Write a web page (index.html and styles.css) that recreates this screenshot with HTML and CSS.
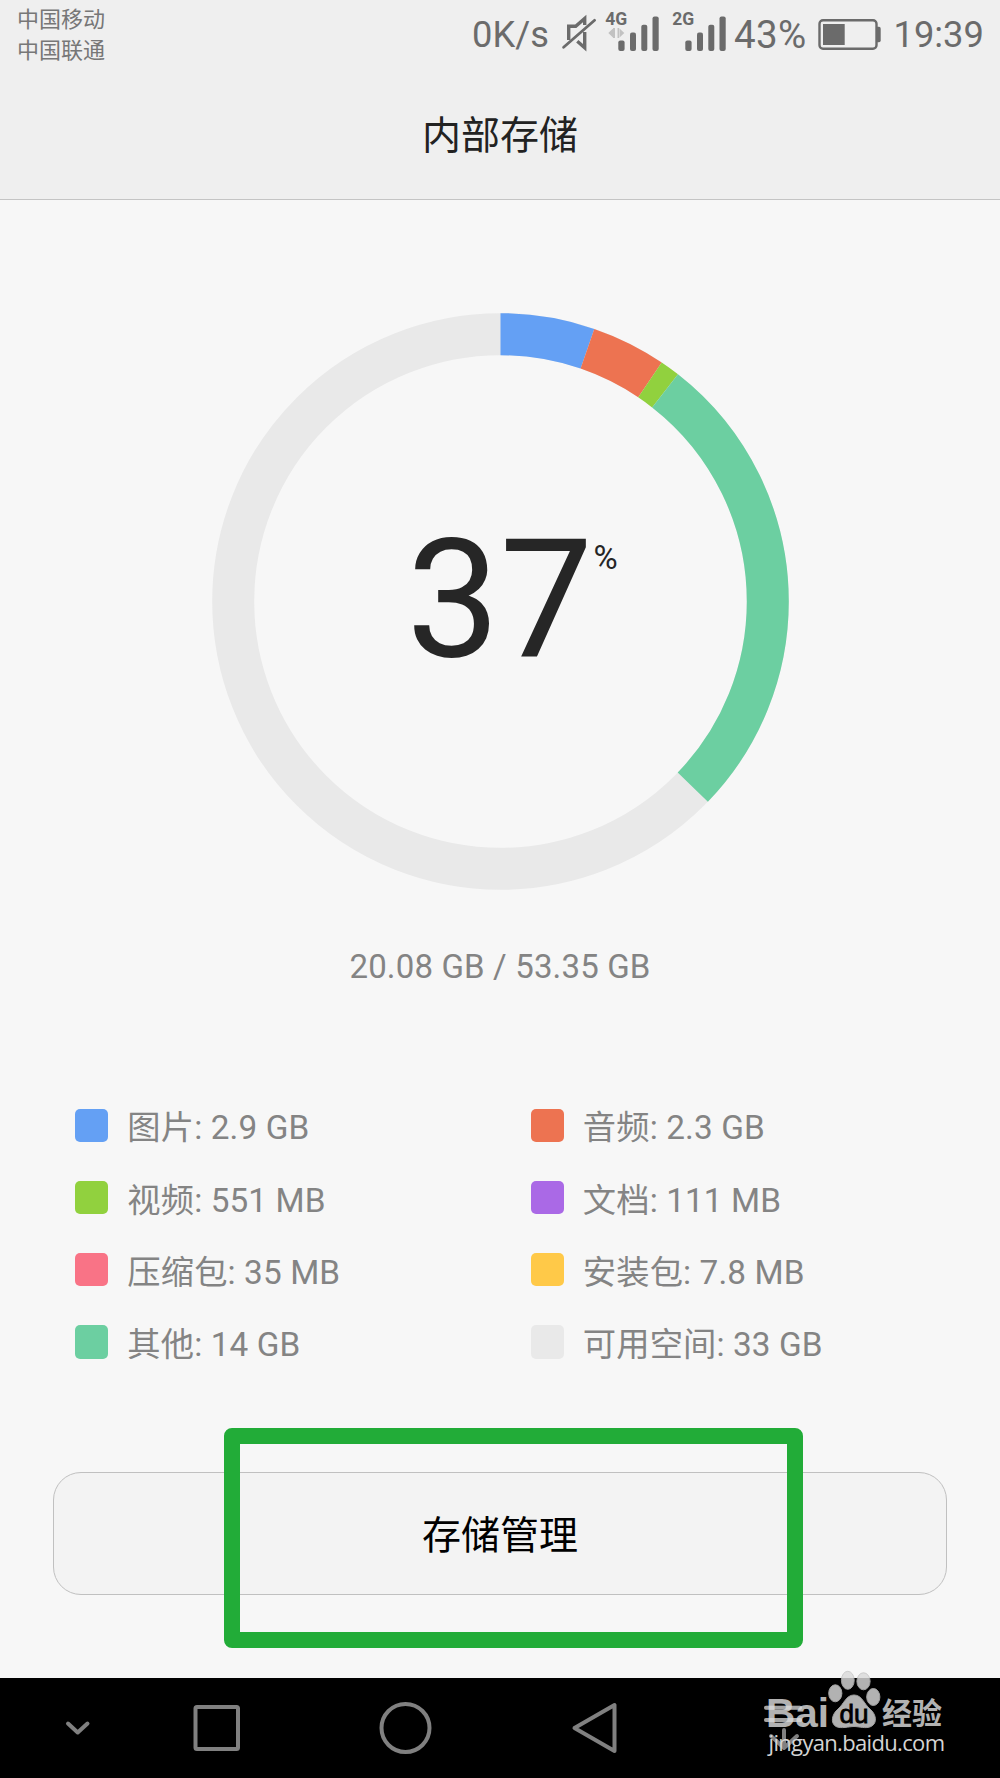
FILE: index.html
```html
<!DOCTYPE html>
<html lang="zh-CN">
<head>
<meta charset="utf-8">
<title>内部存储</title>
<link rel="stylesheet" href="styles.css">
</head>
<body>
<div class="screen">
  <header class="header">
    <div class="status">
      <div class="carriers"><span>中国移动</span><span>中国联通</span></div>
      <div class="indicators">
        <span class="speed">0K/s</span>
        <svg class="mute" viewBox="0 0 36 70"><g fill="none" stroke="#6b6b6b"><path d="M7.700 40V26.300h7L23.700 18.400V25M23.700 32V47.800L16.300 41.300" stroke-width="3.400"/><path d="M2.600 47.300L33.600 20.300" stroke-width="2.800" stroke-linecap="round"/></g></svg>
        <svg class="signal" viewBox="0 0 56 70"><text class="net" x="0.300" y="24.800">4G</text><path fill="#c2c2c2" d="M3.300 33L8.500 28v10zM19.300 33L14 28v10zM8 28h2v10H8zM12.500 28h2v10h-2z"/><g fill="#6b6b6b"><rect x="13.300" y="40.600" width="6.300" height="10.400" rx="2"/><rect x="25" y="32.600" width="6" height="18.400" rx="2"/><rect x="36.300" y="24.800" width="6" height="26.200" rx="2"/><rect x="47.500" y="16.600" width="6.200" height="34.400" rx="2"/></g></svg>
        <svg class="signal second" viewBox="0 0 56 70"><text class="net" x="0.300" y="24.800">2G</text><g fill="#6b6b6b"><rect x="13.300" y="40.600" width="6.300" height="10.400" rx="2"/><rect x="25" y="32.600" width="6" height="18.400" rx="2"/><rect x="36.300" y="24.800" width="6" height="26.200" rx="2"/><rect x="47.500" y="16.600" width="6.200" height="34.400" rx="2"/></g></svg>
        <span class="charge">43%</span>
        <svg class="battery" viewBox="0 0 64 70"><rect x="1.500" y="20.300" width="57" height="28.500" rx="3.500" fill="none" stroke="#6b6b6b" stroke-width="2.400"/><rect x="5" y="24" width="21.700" height="21" fill="#6b6b6b"/><path fill="#6b6b6b" d="M59 26.700h2q1.700 0 1.700 2v11.500q0 2-1.700 2h-2z"/></svg>
        <span class="clock">19:39</span>
      </div>
    </div>
    <h1 class="title">内部存储</h1>
  </header>

  <main class="content">
    <div class="chart">
      <svg class="ring" viewBox="-288.500 -288.500 577 577">
        <g fill="none" stroke-width="42" transform="rotate(-90)">
          <circle r="267.300" stroke="#e9e9e9"/>
          <circle r="267.300" stroke="#64a0f4" pathLength="360" stroke-dasharray="19 341"/>
          <circle r="267.300" stroke="#ed7351" pathLength="360" stroke-dasharray="15 345" stroke-dashoffset="-19"/>
          <circle r="267.300" stroke="#91d13e" pathLength="360" stroke-dasharray="4 356" stroke-dashoffset="-34"/>
          <circle r="267.300" stroke="#6ccfa1" pathLength="360" stroke-dasharray="96 264" stroke-dashoffset="-38"/>
        </g>
      </svg>
      <div class="percent"><span class="number">37</span><span class="unit">%</span></div>
    </div>
    <p class="usage">20.08 GB / 53.35 GB</p>
    <ul class="legend">
      <li><i class="swatch blue"></i><span>图片: 2.9 GB</span></li>
      <li><i class="swatch orange"></i><span>音频: 2.3 GB</span></li>
      <li><i class="swatch lime"></i><span>视频: 551 MB</span></li>
      <li><i class="swatch purple"></i><span>文档: 111 MB</span></li>
      <li><i class="swatch pink"></i><span>压缩包: 35 MB</span></li>
      <li><i class="swatch yellow"></i><span>安装包: 7.8 MB</span></li>
      <li><i class="swatch teal"></i><span>其他: 14 GB</span></li>
      <li><i class="swatch gray"></i><span>可用空间: 33 GB</span></li>
    </ul>
    <button class="manage" type="button">存储管理</button>
  </main>

  <nav class="navbar">
    <svg viewBox="0 0 1000 100" fill="none" stroke="#808080" stroke-width="4" stroke-linecap="round" stroke-linejoin="round">
      <path d="M68 45.500L77.700 54.500L87.500 45.500"/>
      <rect x="195.500" y="29" width="42.500" height="42" rx="1.500"/>
      <circle cx="405.500" cy="50" r="24"/>
      <path d="M574.500 50L614.500 27V73z"/>
      <path d="M766 29.700H800M766 42H800M784 52V70M771 58L784 70L797 58"/>
    </svg>
  </nav>

  <div class="highlight"></div>
  <svg class="watermark" viewBox="0 0 200 100">
    <g class="mark">
      <text class="bai" x="6" y="56.600" textLength="63" lengthAdjust="spacingAndGlyphs">Bai</text>
      <g class="paw"><ellipse cx="75.300" cy="23.300" rx="6.600" ry="8.500"/><ellipse cx="87.800" cy="10.300" rx="6.400" ry="9"/><ellipse cx="103.500" cy="11.300" rx="6.600" ry="8.500"/><ellipse cx="113.300" cy="27" rx="6.600" ry="8.500"/>
      <path d="M94 25C86 25 84 34 78 39C72 44 70 53 76 56.500C81 59 89 56.500 94 56.500S106 59 111 56.500C118 53 116 44 110 39C104 34 102 25 94 25z"/></g>
      <text class="du" x="79.500" y="53" textLength="29" lengthAdjust="spacingAndGlyphs">du</text>
      <text class="exp" x="122" y="53.500" textLength="60">经验</text>
    </g>
    <path class="veil" d="M6 37.700H40M6 50H40"/>
    <text class="url" x="8.500" y="80.500" textLength="176.500">jingyan.baidu.com</text>
  </svg>
</div>
</body>
</html>
```
FILE: styles.css
```css
* { box-sizing: border-box; }
body { margin: 0; }
.screen {
  position: relative;
  width: 1000px;
  height: 1778px;
  overflow: hidden;
  display: flex;
  flex-direction: column;
  background: #f7f7f7;
  font-family: Roboto, "Noto Sans CJK SC", sans-serif;
}
.header { height: 200px; background: #efefef; border-bottom: 1px solid #c4c4c4; }
.status { height: 70px; display: flex; justify-content: space-between; padding: 0 16px 0 17px; color: #6b6b6b; }
.carriers { display: flex; flex-direction: column; padding-top: 3.500px; font-size: 22px; line-height: 31.500px; color: #777; }
.indicators { display: flex; line-height: 70px; font-size: 36.300px; white-space: nowrap; }
.indicators svg { height: 70px; flex: none; }
.speed { width: 89px; }
.mute { width: 36px; margin-right: 8.300px; }
.signal { width: 56px; }
.second { margin-left: 10.700px; }
.net { font: 700 17.500px Roboto, sans-serif; fill: #6b6b6b; }
.charge { width: 90px; padding-left: 6px; font-size: 38.500px; letter-spacing: .4px; }
.battery { width: 64px; }
.clock { width: 102px; padding-left: 11.500px; }
.title { margin: 0; padding-top: 31px; text-align: center; font-size: 39px; line-height: 70px; font-weight: 400; color: #222; }
.content { height: 1478px; display: flex; flex-direction: column; align-items: center; }
.chart { display: grid; width: 577px; height: 577px; margin-top: 113px; }
.ring, .percent { grid-area: 1 / 1; }
.ring { width: 577px; height: 577px; }
.percent { display: flex; padding: 202px 0 0 195px; color: #262626; }
.number { font-size: 166px; line-height: 170px; }
.unit { font-size: 33px; line-height: 40px; padding-top: 23px; padding-left: .5px; }
.usage { margin: 52px 0 0; font-size: 33px; line-height: 50px; letter-spacing: .15px; color: #848484; white-space: nowrap; }
.legend {
  width: 1000px;
  margin: 116.500px 0 0;
  padding: 0 0 0 75px;
  list-style: none;
  display: grid;
  grid-template-columns: 455.500px 1fr;
  grid-auto-rows: 33.300px;
  row-gap: 39px;
  font-size: 33.300px;
  line-height: 33.300px;
  color: #848484;
}
.legend li { display: flex; gap: 19px; white-space: nowrap; }
.legend span { padding-top: 2.800px; letter-spacing: .12px; }
.swatch { width: 33.300px; height: 33.300px; border-radius: 5px; }
.blue { background: #64a0f4; }
.orange { background: #ed7351; }
.lime { background: #91d13e; }
.purple { background: #aa69e6; }
.pink { background: #f97386; }
.yellow { background: #ffc948; }
.teal { background: #6ccfa1; }
.gray { background: #e9e9e9; }
.manage {
  width: 894px;
  height: 123px;
  margin-top: 113.500px;
  padding: 0 0 4px;
  border: 1px solid #c0c0c0;
  border-radius: 28px;
  background: #f3f3f3;
  color: #000;
  font: 400 39px Roboto, "Noto Sans CJK SC", sans-serif;
}
.navbar { height: 100px; background: #000; }
.navbar svg { display: block; width: 1000px; height: 100px; }
.highlight { position: absolute; left: 224px; top: 1427.500px; width: 579px; height: 220px; border: 16.500px solid #22ac38; border-radius: 8px; }
.watermark { position: absolute; left: 760px; top: 1670px; width: 200px; height: 100px; overflow: visible; }
.mark { opacity: .82; fill: #dadada; }
.paw { stroke: #c4c4c4; stroke-width: 1; }
.bai { font: 700 40px "Liberation Sans", sans-serif; }
.du { font: 400 26px "Liberation Sans", sans-serif; fill: #000; stroke: #000; stroke-width: .8px; }
.exp { font: 700 30px "Noto Sans CJK SC", sans-serif; }
.veil { fill: none; stroke: #ddd; stroke-opacity: .4; stroke-width: 4px; stroke-linecap: round; }
.url { font: 400 22px "Open Sans", sans-serif; fill: #d4d4d4; }
```
